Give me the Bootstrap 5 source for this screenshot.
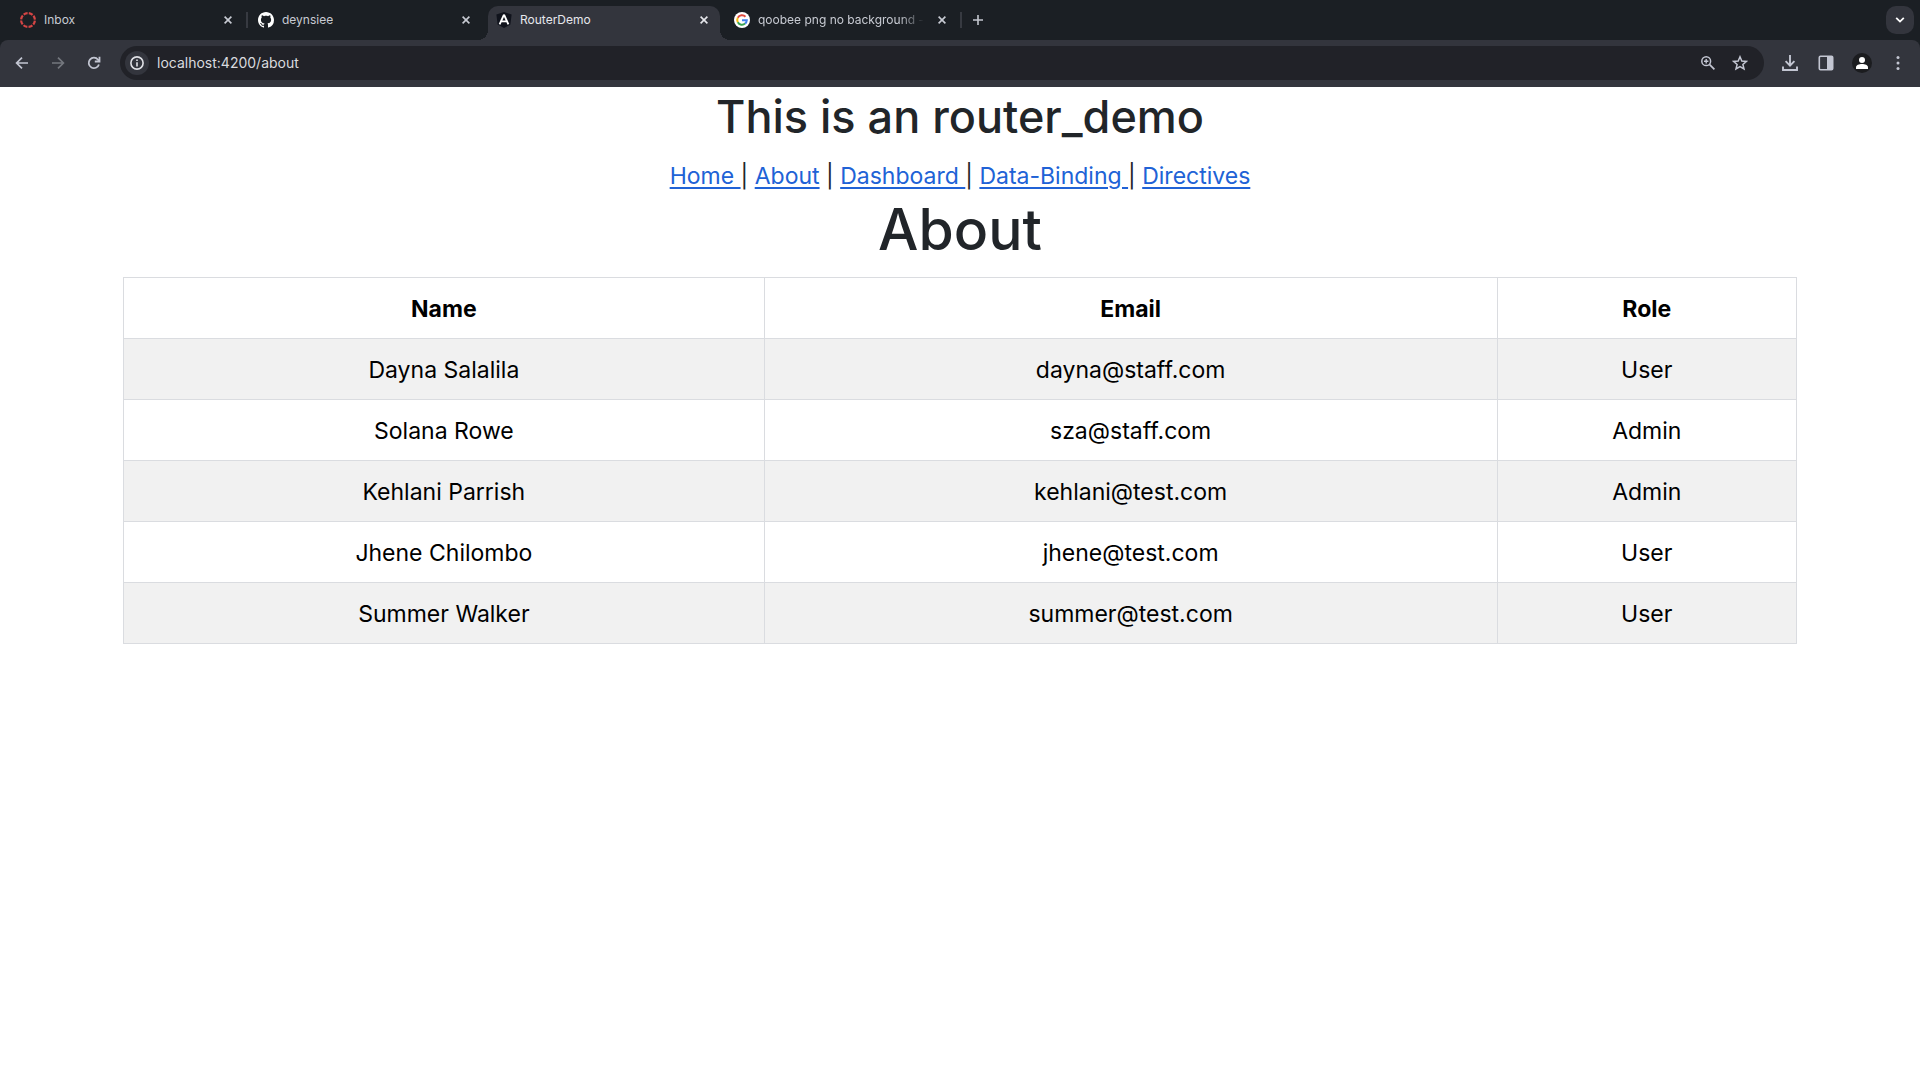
<!DOCTYPE html>
<html lang="en">
<head>
<meta charset="utf-8">
<meta name="viewport" content="width=device-width, initial-scale=1">
<title>RouterDemo</title>
<link href="https://cdn.jsdelivr.net/npm/bootstrap@5.3.0/dist/css/bootstrap.min.css" rel="stylesheet">
<style>
  body { font-family: Inter, "Liberation Sans", sans-serif; color: #212529; background: #fff; }
  button, input { font-family: inherit; }
  svg { display: block; flex: none; }

  /* Tab strip */
  .tab-strip { background: #1b1f24; height: 40px; padding: 0 6px 0 12px; }
  .tab-item { flex: 0 1 232px; min-width: 0; height: 28px; padding: 0 8px; color: #c8cbd3; }
  .tab-item a { color: inherit; font-size: 12px; line-height: 16px; min-width: 0; }
  .tab-title { overflow: hidden; white-space: nowrap; }
  .tab-fade { -webkit-mask-image: linear-gradient(to right, #000 85%, transparent); mask-image: linear-gradient(to right, #000 85%, transparent); }
  .tab-gap { flex: none; width: 6px; height: 16px; }
  .tab-gap.lined::before { content: ""; display: block; width: 2px; height: 16px; margin: 0 2px; background: #373a41; }
  .tab-active { height: 34px; padding-bottom: 6px; background: #33353d; border-radius: 10px 10px 0 0; color: #e6e7ec; align-self: flex-end; position: relative; }
  .tab-active::before, .tab-active::after { content: ""; position: absolute; bottom: 0; width: 10px; height: 10px; }
  .tab-active::before { left: -10px; background: radial-gradient(circle at 0 0, transparent 10px, #33353d 10px); }
  .tab-active::after { right: -10px; background: radial-gradient(circle at 100% 0, transparent 10px, #33353d 10px); }
  .bare-btn { border: 0; padding: 0; background: none; color: inherit; display: flex; align-items: center; justify-content: center; flex: none; }
  .close-btn { width: 16px; height: 16px; }
  .new-tab { width: 28px; height: 28px; color: #c3c6ce; }
  .tab-search { width: 28px; height: 28px; border-radius: 10px; background: #33353d; color: #fff; }

  /* Toolbar */
  .toolbar-wrap { background: #1b1f24; }
  .tool-row { background: #33353d; border-radius: 8px 8px 0 0; height: 47px; padding: 0 4px 1px; color: #c3c6d2; }
  .tool-btn { width: 36px; height: 34px; }
  .tool-btn:disabled { color: #74777e; }
  .address-box { background: #212228; border-radius: 17px; height: 34px; padding: 0 8px 0 5px; margin: 0 8px; min-width: 0; }
  .site-info { width: 24px; height: 24px; border-radius: 12px; background: #33353d; color: #e0e1e6; }
  .address-box input { border: 0; outline: 0; background: none; color: #d9dadf; font-size: 14px; line-height: 20px; padding: 0 8px; min-width: 0; }
  .mark-btn { width: 32px; height: 34px; }

  /* Page */
  .page-title { font-size: 45px; line-height: 60px; margin-bottom: 11px; }
  .page-links { font-size: 23px; line-height: 36px; }
  .page-links a { color: #2062d6; text-underline-offset: 3px; text-decoration-thickness: 2px; text-decoration-skip-ink: auto; }
  .view-title { font-size: 57px; line-height: 72px; margin-bottom: 11px; }
  .view-area { padding: 0 123px; }
  .people { font-size: 23px; line-height: 36px; --bs-table-color: #000; --bs-table-striped-color: #000; --bs-table-striped-bg: #f1f1f1; border-color: #dadce0; color: #000; }
  .people th, .people td { padding: 13px 12px 11px; }
  .col-name { width: 38.3%; }
  .col-email { width: 43.8%; }
</style>
<script src="https://cdn.jsdelivr.net/npm/bootstrap@5.3.0/dist/js/bootstrap.bundle.min.js"></script>
</head>
<body>
<header>
  <nav class="tab-strip d-flex align-items-center" aria-label="Tabs">
    <div class="tab-item d-flex align-items-center">
      <a href="#" class="d-flex align-items-center gap-2 flex-grow-1 text-decoration-none">
        <svg width="16" height="16" viewBox="0 0 16 16" fill="none" stroke="#d64545"><circle cx="8" cy="8" r="6.900" stroke-width="2.200" stroke-dasharray="4.200 1.219" stroke-dashoffset="-.6"/></svg>
        <span class="tab-title">Inbox</span>
      </a>
      <button class="bare-btn close-btn" aria-label="Close Inbox"><svg width="8" height="8" viewBox="0 0 8 8" stroke="currentColor" stroke-width="1.600"><path d="M.6.6l6.800 6.800M7.400.6L.6 7.400"/></svg></button>
    </div>
    <span class="tab-gap lined"></span>
    <div class="tab-item d-flex align-items-center">
      <a href="#" class="d-flex align-items-center gap-2 flex-grow-1 text-decoration-none">
        <svg width="16" height="16" viewBox="0 0 16 16" fill="#fff"><path d="M8 0C3.58 0 0 3.58 0 8c0 3.54 2.29 6.53 5.47 7.59.4.07.55-.17.55-.38 0-.19-.01-.82-.01-1.49-2.01.37-2.53-.49-2.69-.94-.09-.23-.48-.94-.82-1.13-.28-.15-.68-.52-.01-.53.63-.01 1.08.58 1.23.82.72 1.21 1.87.87 2.33.66.07-.52.28-.87.51-1.07-1.78-.2-3.64-.89-3.64-3.95 0-.87.31-1.59.82-2.15-.08-.2-.36-1.02.08-2.12 0 0 .67-.21 2.2.82.64-.18 1.32-.27 2-.27s1.36.09 2 .27c1.53-1.04 2.2-.82 2.2-.82.44 1.1.16 1.92.08 2.12.51.56.82 1.27.82 2.15 0 3.07-1.87 3.75-3.65 3.95.29.25.54.73.54 1.48 0 1.07-.01 1.93-.01 2.2 0 .21.15.46.55.38A8.01 8.01 0 0 0 16 8c0-4.42-3.58-8-8-8z"/></svg>
        <span class="tab-title">deynsiee</span>
      </a>
      <button class="bare-btn close-btn" aria-label="Close deynsiee"><svg width="8" height="8" viewBox="0 0 8 8" stroke="currentColor" stroke-width="1.600"><path d="M.6.6l6.800 6.800M7.400.6L.6 7.400"/></svg></button>
    </div>
    <span class="tab-gap"></span>
    <div class="tab-item tab-active d-flex align-items-center">
      <a href="#" class="d-flex align-items-center gap-2 flex-grow-1 text-decoration-none" aria-current="page">
        <svg width="16" height="16" viewBox="0 0 16 16"><path d="M8 0l7.600 2.600-1.200 10L8 16l-6.400-3.400L.4 2.600z" fill="#10131c"/><path d="M8 2.600L3.600 12.400M8 2.600l4.400 9.800M5.400 9.400h5.200" fill="none" stroke="#fff" stroke-width="1.900"/></svg>
        <span class="tab-title">RouterDemo</span>
      </a>
      <button class="bare-btn close-btn" aria-label="Close RouterDemo"><svg width="8" height="8" viewBox="0 0 8 8" stroke="currentColor" stroke-width="1.600"><path d="M.6.6l6.800 6.800M7.400.6L.6 7.400"/></svg></button>
    </div>
    <span class="tab-gap"></span>
    <div class="tab-item d-flex align-items-center">
      <a href="#" class="d-flex align-items-center gap-2 flex-grow-1 text-decoration-none">
        <svg width="16" height="16" viewBox="0 0 16 16"><circle cx="8" cy="8" r="8" fill="#fff"/><g fill="none" stroke-width="2"><path d="M11.500 4.700A4.800 4.800 0 0 0 3.800 5.700" stroke="#e04a3f"/><path d="M3.800 5.700a4.800 4.800 0 0 0 0 4.600" stroke="#f2b90f"/><path d="M3.800 10.300a4.800 4.800 0 0 0 7.300 1.300" stroke="#37a352"/><path d="M11.100 11.600A4.800 4.800 0 0 0 12.800 8.200H8" stroke="#4081ec"/></g></svg>
        <span class="tab-title tab-fade">qoobee png no background -</span>
      </a>
      <button class="bare-btn close-btn ms-1" aria-label="Close qoobee png no background"><svg width="8" height="8" viewBox="0 0 8 8" stroke="currentColor" stroke-width="1.600"><path d="M.6.6l6.800 6.800M7.400.6L.6 7.400"/></svg></button>
    </div>
    <span class="tab-gap lined"></span>
    <button class="bare-btn new-tab" aria-label="New tab"><svg width="10" height="10" viewBox="0 0 10 10" stroke="currentColor" stroke-width="1.600"><path d="M5 0v10M0 5h10"/></svg></button>
    <button class="bare-btn tab-search ms-auto" aria-label="Search tabs"><svg width="10" height="6" viewBox="0 0 10 6" fill="none" stroke="currentColor" stroke-width="1.800"><path d="M1.200.8L5 4.600 8.800.8"/></svg></button>
  </nav>

  <div class="toolbar-wrap">
    <div class="tool-row d-flex align-items-center">
      <button class="bare-btn tool-btn" aria-label="Back"><svg width="14" height="14" viewBox="0 0 14 14" fill="none" stroke="currentColor" stroke-width="1.700"><path d="M13 7H2M7 1.600L1.600 7 7 12.400"/></svg></button>
      <button class="bare-btn tool-btn" aria-label="Forward" disabled><svg width="14" height="14" viewBox="0 0 14 14" fill="none" stroke="currentColor" stroke-width="1.700"><path d="M1 7h11M7 1.600L12.400 7 7 12.400"/></svg></button>
      <button class="bare-btn tool-btn" aria-label="Reload"><svg width="14" height="14" viewBox="0 0 14 14" fill="none" stroke="currentColor" stroke-width="1.800"><path d="M11.900 8.400A5.200 5.200 0 1 1 11 3.700L12.300 5"/><path d="M12.500.8v4.700H7.800"/></svg></button>

      <form class="address-box d-flex align-items-center flex-grow-1">
        <button type="button" class="bare-btn site-info" aria-label="Site information"><svg width="14" height="14" viewBox="0 0 14 14" fill="none" stroke="currentColor" stroke-width="1.600"><circle cx="7" cy="7" r="6.100"/><path d="M7 6.200v4.200M7 3.400v1.700"/></svg></button>
        <input type="text" class="flex-grow-1" aria-label="Address" value="localhost:4200/about" spellcheck="false">
        <button type="button" class="bare-btn mark-btn" aria-label="Zoom"><svg width="14" height="14" viewBox="0 0 14 14" fill="none" stroke="currentColor"><circle cx="5.200" cy="5.200" r="4.400" stroke-width="1.500"/><path d="M8.400 8.400l5 5" stroke-width="1.700"/><path d="M5.200 3v4.400M3 5.200h4.400" stroke-width="1.400"/></svg></button>
        <button type="button" class="bare-btn mark-btn" aria-label="Bookmark"><svg width="16" height="16" viewBox="0 0 16 16" fill="none" stroke="currentColor" stroke-width="1.500"><path d="M8 1.800l1.800 4.200 4.600.4-3.500 3 1.100 4.500L8 11.500l-4 2.400 1.100-4.500-3.500-3 4.600-.4z"/></svg></button>
      </form>

      <button class="bare-btn tool-btn" aria-label="Downloads"><svg width="16" height="16" viewBox="0 0 16 16" fill="none" stroke="currentColor" stroke-width="1.900"><path d="M8 0v10M3.600 6.200L8 10.600l4.400-4.400M1 11.500V15h14v-3.500"/></svg></button>
      <button class="bare-btn tool-btn" aria-label="Side panel"><svg width="16" height="16" viewBox="0 0 16 16"><rect x="1.300" y="1.300" width="13.400" height="13.400" rx="1.200" fill="none" stroke="currentColor" stroke-width="1.600"/><path d="M9 1h5.200v14H9z" fill="currentColor"/></svg></button>
      <button class="bare-btn tool-btn" aria-label="Profile"><svg width="20" height="20" viewBox="0 0 20 20"><circle cx="10" cy="10" r="10" fill="#1b1c1f"/><circle cx="10" cy="7" r="3" fill="#fff"/><path d="M4 16v-1.600c0-2.200 3-3.400 6-3.400s6 1.200 6 3.400V16z" fill="#fff"/></svg></button>
      <button class="bare-btn tool-btn" aria-label="Menu"><svg width="4" height="14" viewBox="0 0 4 14" fill="currentColor"><circle cx="2" cy="1.600" r="1.500"/><circle cx="2" cy="7" r="1.500"/><circle cx="2" cy="12.400" r="1.500"/></svg></button>
    </div>
  </div>
</header>

<main class="text-center">
  <h2 class="page-title">This is an router_demo</h2>
  <nav class="page-links" aria-label="Pages"><a href="#">Home </a>| <a href="#">About</a> | <a href="#">Dashboard </a>| <a href="#">Data-Binding </a>| <a href="#">Directives</a></nav>
  <h1 class="view-title">About</h1>
  <div class="view-area">
    <table class="table table-bordered table-striped people mb-0">
      <thead>
        <tr><th scope="col" class="col-name">Name</th><th scope="col" class="col-email">Email</th><th scope="col">Role</th></tr>
      </thead>
      <tbody>
        <tr><td>Dayna Salalila</td><td>dayna@staff.com</td><td>User</td></tr>
        <tr><td>Solana Rowe</td><td>sza@staff.com</td><td>Admin</td></tr>
        <tr><td>Kehlani Parrish</td><td>kehlani@test.com</td><td>Admin</td></tr>
        <tr><td>Jhene Chilombo</td><td>jhene@test.com</td><td>User</td></tr>
        <tr><td>Summer Walker</td><td>summer@test.com</td><td>User</td></tr>
      </tbody>
    </table>
  </div>
</main>
</body>
</html>
